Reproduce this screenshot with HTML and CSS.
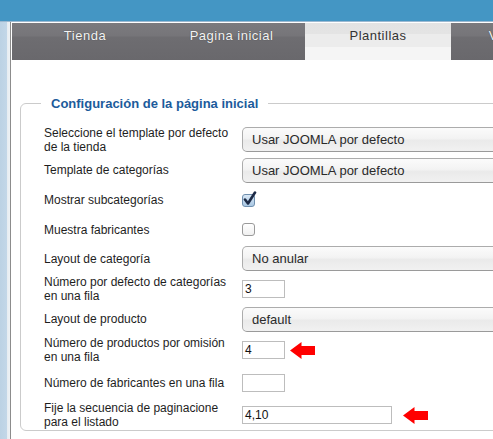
FILE: index.html
```html
<!DOCTYPE html>
<html lang="es">
<head>
<meta charset="utf-8">
<title>Configuración</title>
<link rel="stylesheet" href="styles.css">
</head>
<body>
<div class="topbar"></div>
<div class="main">
  <div class="sidebar"></div>
  <div class="content">
    <nav class="tabs">
      <div class="tab tab-a">Tienda</div>
      <div class="tab tab-b">Pagina inicial</div>
      <div class="tab tab-a active">Plantillas</div>
      <div class="tab tab-a">Ver precios</div>
    </nav>
    <fieldset class="panel">
      <legend class="legend">Configuración de la página inicial</legend>
      <div class="form">
        <div class="label">Seleccione el template por defecto de la tienda</div>
        <div class="control"><div class="select">Usar JOOMLA por defecto</div></div>

        <div class="label">Template de categorías</div>
        <div class="control"><div class="select">Usar JOOMLA por defecto</div></div>

        <div class="label">Mostrar subcategorías</div>
        <div class="control">
          <span class="checkbox checked">
            <svg class="check" width="15" height="16" viewBox="0 0 15 16"><path d="M3 8.5 L6 12.5 L13 1.5" fill="none" stroke="#1c2a45" stroke-width="2.6" stroke-linecap="round" stroke-linejoin="round"/></svg>
          </span>
        </div>

        <div class="label">Muestra fabricantes</div>
        <div class="control"><span class="checkbox"></span></div>

        <div class="label">Layout de categoría</div>
        <div class="control"><div class="select">No anular</div></div>

        <div class="label">Número por defecto de categorías en una fila</div>
        <div class="control"><div class="input">3</div></div>

        <div class="label">Layout de producto</div>
        <div class="control"><div class="select">default</div></div>

        <div class="label">Número de productos por omisión en una fila</div>
        <div class="control">
          <div class="input">4</div>
          <svg class="arrow" width="25" height="17" viewBox="0 0 25 17"><path d="M0 8.5 L11.5 0 L11.5 4 L25 4 L25 13 L11.5 13 L11.5 17 Z" fill="#ff0000"/></svg>
        </div>

        <div class="label">Número de fabricantes en una fila</div>
        <div class="control"><div class="input"></div></div>

        <div class="label">Fije la secuencia de paginacione para el listado</div>
        <div class="control">
          <div class="input input-long">4,10</div>
          <svg class="arrow arrow-far" width="25" height="17" viewBox="0 0 25 17"><path d="M0 8.5 L11.5 0 L11.5 4 L25 4 L25 13 L11.5 13 L11.5 17 Z" fill="#ff0000"/></svg>
        </div>
      </div>
    </fieldset>
  </div>
</div>
</body>
</html>
```

FILE: styles.css
```css
html, body {
  margin: 0;
  padding: 0;
  overflow: hidden;
  background: #ffffff;
}

body {
  width: 493px;
  height: 439px;
  font-family: "Liberation Sans", Arial, sans-serif;
  color: #1e1e1e;
}

.topbar {
  height: 21px;
  background: #4496c4;
  border-bottom: 1px solid #9cb9d1;
}

.main {
  display: flex;
  height: 417px;
}

.sidebar {
  width: 10px;
  flex: 0 0 10px;
  background: linear-gradient(to right, #bcd2e4 0, #c3d7e8 7px, #e6ecf1 7px, #eef2f5 10px);
  border-right: 1px solid #8c8c8c;
}

.content {
  flex: 1;
  min-width: 0;
  padding-left: 1px;
  overflow: hidden;
}

.tabs {
  display: flex;
  margin-top: 1px;
  height: 37px;
  background: linear-gradient(#7b7a7e 0, #767579 13px, #6e6d71 14px, #69686c 37px);
  overflow: hidden;
}

.tab {
  flex: 0 0 146px;
  text-align: center;
  line-height: 26px;
  font-size: 13px;
  letter-spacing: 0.5px;
  color: #f4f4f4;
  text-shadow: 0 0 1px #3a3a3c;
  white-space: nowrap;
}

.tab-b {
  flex-basis: 147px;
}

.tab.active {
  color: #333333;
  text-shadow: none;
  background: linear-gradient(#e3e3e3 0, #e4e4e4 11px, #ececec 11px, #ececec 24px, #f5f5f5 24px);
}

.panel {
  margin: 35px -30px 0 8px;
  padding: 13px 0 0 23px;
  border: 1px solid #cbcbcb;
  border-radius: 6px;
  min-width: 0;
}

.legend {
  margin-left: -3px;
  padding: 2px 10px 0;
  font-size: 13px;
  line-height: 14px;
  font-weight: bold;
  color: #1c5b9b;
}

.form {
  display: grid;
  grid-template-columns: 198px 1fr;
  grid-template-rows: 31px 30px 30px 29px 29px 31px 30px 32px 34px 30px;
  align-items: center;
}

.label {
  font-size: 12px;
  line-height: 14px;
  max-width: 190px;
  color: #1e1e1e;
}

.control {
  display: flex;
  align-items: center;
}

.select {
  box-sizing: border-box;
  width: 320px;
  height: 25px;
  padding-left: 9px;
  border: 1px solid #acacac;
  border-bottom-color: #9a9a9a;
  border-radius: 5px;
  background: linear-gradient(#fbfbfb, #f3f3f3 45%, #eaeaea 55%, #f1f1f1);
  font-size: 13px;
  line-height: 23px;
  color: #2a2a2a;
  white-space: nowrap;
}

.checkbox {
  position: relative;
  box-sizing: border-box;
  width: 13px;
  height: 13px;
  border: 1px solid #9a9a9a;
  border-radius: 3px;
  background: linear-gradient(#ffffff, #f0f0f0);
}

.checkbox.checked {
  border-color: #6f8fae;
  background: linear-gradient(#d9e8f6, #a9c7e3);
}

.check {
  position: absolute;
  left: -1px;
  top: -4px;
}

.input {
  box-sizing: border-box;
  width: 43px;
  height: 18px;
  padding-left: 2px;
  border: 1px solid #bdbdbd;
  background: #ffffff;
  font-size: 12px;
  line-height: 16px;
  color: #111111;
}

.input-long {
  width: 150px;
}

.arrow {
  margin-left: 5px;
  flex: 0 0 auto;
}

.arrow-far {
  margin-left: 11px;
}
```
